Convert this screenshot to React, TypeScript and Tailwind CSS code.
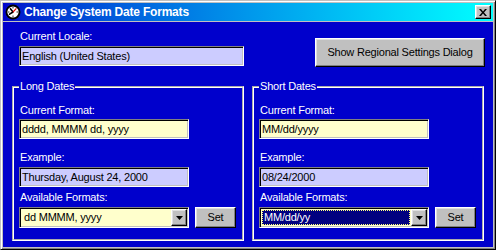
import React from 'react';

const sunken =
  'border border-t-[#808080] border-l-[#808080] border-b-white border-r-white shadow-[inset_1px_1px_0_#000,inset_-1px_-1px_0_#c0c0c0]';
const raised =
  'bg-[#c0c0c0] border border-t-white border-l-white border-b-black border-r-black shadow-[inset_-1px_-1px_0_#808080,inset_1px_1px_0_#dfdfdf]';

const Label: React.FC<{ children: React.ReactNode; className?: string }> = ({ children, className = '' }) => (
  <div className={`h-[13px] leading-[13px] pl-[1px] text-white whitespace-nowrap ${className}`}>{children}</div>
);

const TextBox: React.FC<{ value: string; fill: string; className?: string }> = ({ value, fill, className = '' }) => (
  <div className={`${sunken} ${fill} h-[20px] flex items-center pl-[2px] text-black whitespace-nowrap ${className}`}>
    {value}
  </div>
);

const ClockIcon = () => (
  <svg width="16" height="16" viewBox="0 0 16 16" className="shrink-0">
    <circle cx="8" cy="8" r="7.5" fill="#000" />
    <circle cx="8" cy="8" r="5.6" fill="#fff" />
    <path d="M8 3.2v1.2M8 11.6v1.2M3.2 8h1.2M11.6 8h1.2" stroke="#000" strokeWidth="1" />
    <path d="M8 8L4.6 10.2M8 8L5.4 4.8" stroke="#000" strokeWidth="1.6" strokeLinecap="round" />
    <path d="M8 8L11.4 4.4" stroke="#e00000" strokeWidth="1.2" />
  </svg>
);

const Combo: React.FC<{ value: string; selected?: boolean }> = ({ value, selected }) => (
  <div className={`${sunken} bg-[#ffffcc] w-[170px] h-[21px] flex p-[1px]`}>
    <div className="flex-1 min-w-0 p-[1px] flex">
      {selected ? (
        <div className="flex-1 flex items-center bg-[#000080] text-white outline-1 outline-dotted outline-[#ffff80] -outline-offset-1 pl-[2px]">
          {value}
        </div>
      ) : (
        <div className="flex-1 flex items-center pl-[2px] text-black">{value}</div>
      )}
    </div>
    <div className={`${raised} w-[16px] flex items-center justify-center`}>
      <svg width="7" height="4" viewBox="0 0 7 4">
        <path d="M0 0h7L3.5 4z" fill="#000" />
      </svg>
    </div>
  </div>
);

const DateGroup: React.FC<{
  title: string;
  format: string;
  example: string;
  option: string;
  selected?: boolean;
}> = ({ title, format, example, option, selected }) => (
  <fieldset className="w-[232px] h-[161px] border-2 border-white [border-style:groove] px-[5px]">
    <legend className="px-[1px] h-[13px] leading-[13px] text-white">{title}</legend>
    <Label className="mt-[11px]">Current Format:</Label>
    <TextBox value={format} fill="bg-[#ffffcc]" className="w-[170px] mt-[2px]" />
    <Label className="mt-[12px]">Example:</Label>
    <TextBox value={example} fill="bg-[#ccccff]" className="w-[170px] mt-[3px]" />
    <Label className="mt-[4px]">Available Formats:</Label>
    <div className="flex gap-[6px] mt-[3px]">
      <Combo value={option} selected={selected} />
      <button className={`${raised} w-[41px] h-[21px] text-black`}>Set</button>
    </div>
  </fieldset>
);

export default function App() {
  return (
    <div className="w-[496px] h-[250px] font-['Liberation_Sans',Arial,sans-serif] text-[11px] tracking-[-0.2px] select-none">
      <div className="w-full h-full flex flex-col bg-[#c0c0c0] p-[2px] border border-t-[#c0c0c0] border-l-[#c0c0c0] border-b-black border-r-black shadow-[inset_1px_1px_0_#fff,inset_-1px_-1px_0_#808080]">
        <div className="h-[18px] shrink-0 flex items-center pl-[2px] pr-[2px] bg-gradient-to-r from-[#0000cc] to-[#00ffff]">
          <ClockIcon />
          <span className="ml-[3px] text-white font-bold text-[12px] tracking-[-0.2px]">Change System Date Formats</span>
          <button className={`${raised} ml-auto w-[16px] h-[14px] flex items-center justify-center`}>
            <svg width="8" height="7" viewBox="0 0 8 7">
              <path d="M0 0h2l2 2.5L6 0h2L5 3.5 8 7H6L4 4.5 2 7H0l3-3.5z" fill="#000" />
            </svg>
          </button>
        </div>
        <div className="mt-[1px] flex-1 bg-[#0000cc] flex flex-col">
          <div className="flex items-start pl-[16px] pr-[8px] pt-[8px]">
            <div className="w-[225px] flex flex-col">
              <Label>Current Locale:</Label>
              <TextBox value="English (United States)" fill="bg-[#ccccff]" className="mt-[3px]" />
            </div>
            <button className={`${raised} ml-auto mt-[8px] w-[170px] h-[29px] text-black`}>
              Show Regional Settings Dialog
            </button>
          </div>
          <div className="flex gap-[8px] px-[9px] mt-[13px]">
            <DateGroup title="Long Dates" format="dddd, MMMM dd, yyyy" example="Thursday, August 24, 2000" option="dd MMMM, yyyy" />
            <DateGroup title="Short Dates" format="MM/dd/yyyy" example="08/24/2000" option="MM/dd/yy" selected />
          </div>
        </div>
      </div>
    </div>
  );
}
